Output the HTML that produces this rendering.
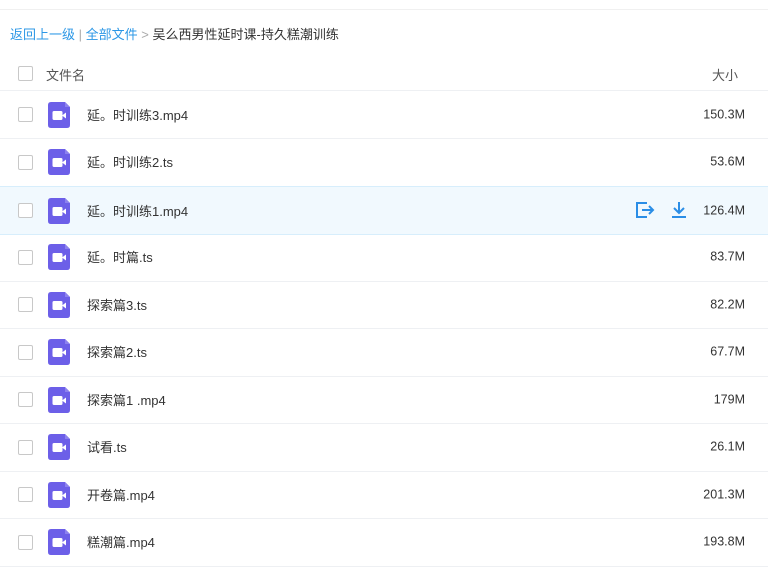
<!DOCTYPE html>
<html><head><meta charset="utf-8"><style>
body{margin:0;width:768px;height:550px;overflow:hidden;background:#fff;font-family:"Liberation Sans","Noto Sans CJK SC",sans-serif;color:#333;font-size:13px;position:relative}
.top{position:absolute;left:0;right:0;top:9px;border-top:1px solid #f0f0f0}
.bc{position:absolute;left:10px;top:24px;font-size:13px;color:#333}
.bc a{color:#2b97e6}
.cb{position:absolute;left:18px;width:13px;height:13px;border:1px solid #c8c8c8;border-radius:2px;background:#fff}
.hdr{position:absolute;left:0;right:0;top:56px;height:34px;border-bottom:1px solid #eef0f3}
.row{position:absolute;left:0;right:0;height:47px;border-bottom:1px solid #eef0f3}
.row.h{background:#f1f9fe;border-top:1px solid #d7eefc;border-bottom:1px solid #d7eefc}
.name{position:absolute;left:87px;top:50%;transform:translateY(-52%);font-size:13px}
.size{position:absolute;right:23px;top:50%;transform:translateY(-52%);font-size:12.5px}
.ic{position:absolute;left:48px;top:50%;margin-top:-13px}
</style></head><body>
<div class="top"></div>
<div class="bc"><a>返回上一级</a> <span style="color:#aaa">|</span> <a>全部文件</a> <span style="color:#aaa">&gt;</span> 吴么西男性延时课-持久糕潮训练</div>
<div class="hdr"><div class="cb" style="top:10px"></div><span style="position:absolute;left:46px;top:9px;color:#555">文件名</span><span style="position:absolute;right:30px;top:9px;color:#555">大小</span></div>
<div id="rows"></div>
<script>
var d=[["延。时训练3.mp4","150.3M"],["延。时训练2.ts","53.6M"],["延。时训练1.mp4","126.4M"],["延。时篇.ts","83.7M"],["探索篇3.ts","82.2M"],["探索篇2.ts","67.7M"],["探索篇1 .mp4","179M"],["试看.ts","26.1M"],["开卷篇.mp4","201.3M"],["糕潮篇.mp4","193.8M"]];
var ic='<svg class="ic" width="22" height="26" viewBox="0 0 22 26"><path d="M3 0H17L22 5V23Q22 26 19 26H3Q0 26 0 23V3Q0 0 3 0Z" fill="#6c5fe8"/><path d="M17 0V5H22Z" fill="#8d82ee"/><rect x="4.5" y="9" width="10" height="9" rx="1.5" fill="#fff"/><path d="M14 13.5L18 10.5V16.5Z" fill="#fff"/></svg>';
var h='';
for(var i=0;i<d.length;i++){var t=91+i*47.5;
h+='<div class="row'+(i==2?' h':'')+'" style="top:'+t+'px"><div class="cb" style="top:16px"></div>'+ic+'<div class="name">'+d[i][0]+'</div><div class="size">'+d[i][1]+'</div>'+
(i==2?'<svg style="position:absolute;left:635px;top:14px" width="20" height="18" viewBox="0 0 20 18" fill="none" stroke="#2b8ee6" stroke-width="2"><path d="M11 3V2H2V16H11V15"/><path d="M7 9H18M14 5L18 9L14 13"/></svg><svg style="position:absolute;left:670px;top:14px" width="18" height="18" viewBox="0 0 18 18" fill="none" stroke="#2b8ee6" stroke-width="2"><path d="M9 1V11M4 7L9 12L14 7M2 16H16"/></svg>':'')+'</div>';}
document.getElementById('rows').innerHTML=h;
</script>
</body></html>
